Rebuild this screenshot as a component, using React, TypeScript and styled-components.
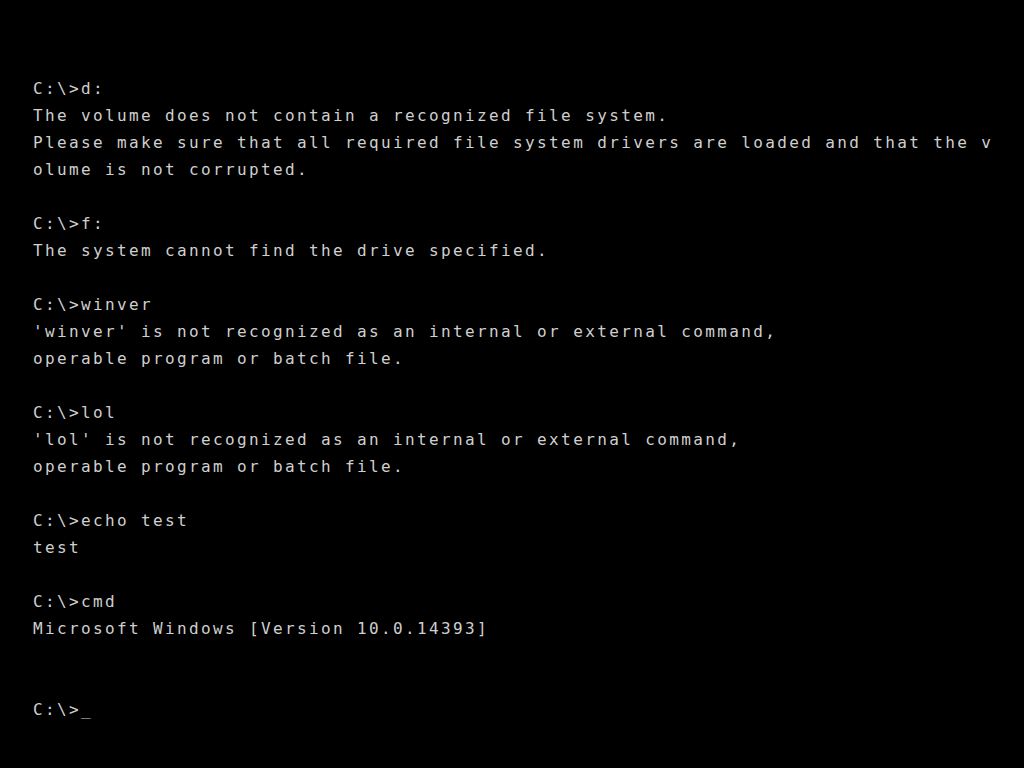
import React from "react";
import styled, { createGlobalStyle } from "styled-components";

const Global = createGlobalStyle`
  html, body { margin: 0; padding: 0; background: #000; }
  #root { min-height: 100vh; }
`;

const Screen = styled.main`
  box-sizing: border-box;
  width: 1024px;
  height: 768px;
  background: #000;
  padding: 75px 0 0 33px;
  overflow: hidden;
`;

const Output = styled.pre`
  margin: 0;
  font-family: "DejaVu Sans Mono", "Liberation Mono", monospace;
  font-size: 16px;
  letter-spacing: 2.37px;
  line-height: 27px;
  color: #cfcfcf;
  white-space: pre;
`;

const Cursor = styled.span`
  display: inline-block;
`;

const lines = [
  "C:\\>d:",
  "The volume does not contain a recognized file system.",
  "Please make sure that all required file system drivers are loaded and that the v",
  "olume is not corrupted.",
  "",
  "C:\\>f:",
  "The system cannot find the drive specified.",
  "",
  "C:\\>winver",
  "'winver' is not recognized as an internal or external command,",
  "operable program or batch file.",
  "",
  "C:\\>lol",
  "'lol' is not recognized as an internal or external command,",
  "operable program or batch file.",
  "",
  "C:\\>echo test",
  "test",
  "",
  "C:\\>cmd",
  "Microsoft Windows [Version 10.0.14393]",
  "",
  "",
];

export default function App() {
  return (
    <>
      <Global />
      <Screen>
        <Output>
          {lines.join("\n") + "\n"}
          C:\&gt;<Cursor>_</Cursor>
        </Output>
      </Screen>
    </>
  );
}
